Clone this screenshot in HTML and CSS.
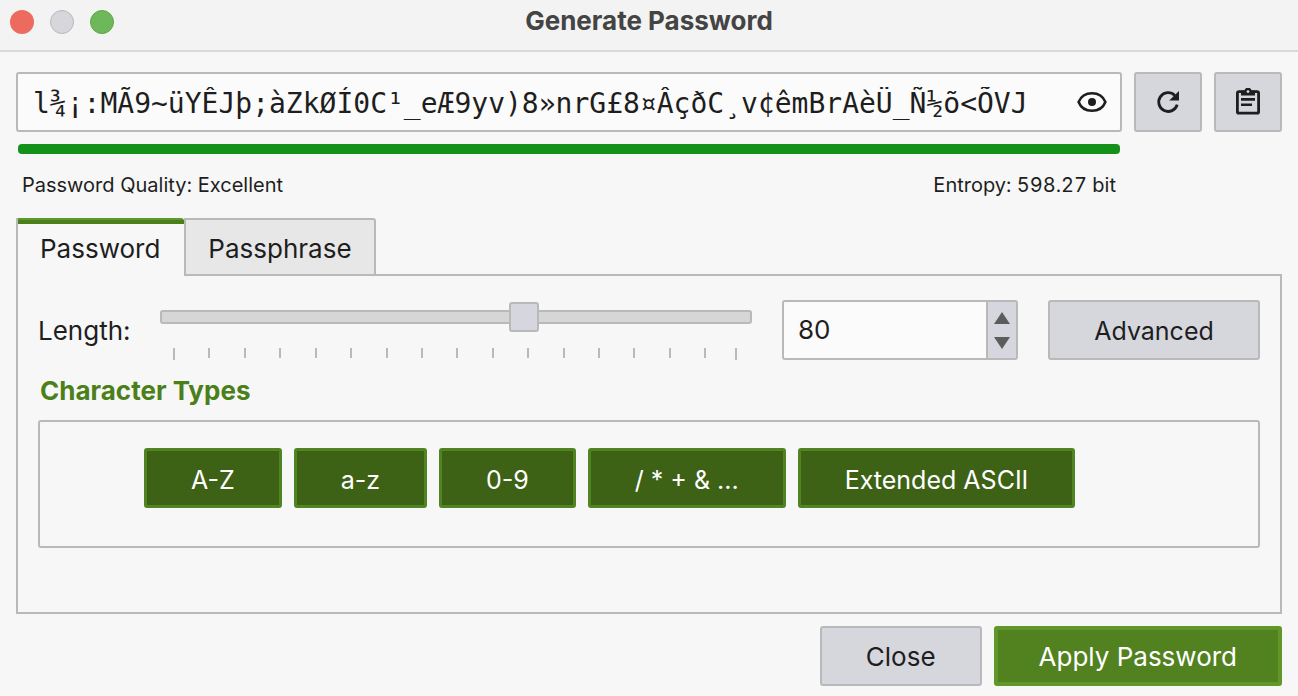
FILE: index.html
```html
<!DOCTYPE html>
<html lang="en">
<head>
  <meta charset="UTF-8">
  <title>Generate Password</title>
  <meta name="viewport" content="width=device-width, initial-scale=1.0">
  <link rel="stylesheet" href="styles.css">
</head>
<body>

  <header class="titlebar">
    <div class="window-buttons">
      <button type="button" class="dot dot-close" aria-label="Close window"></button>
      <button type="button" class="dot dot-min" aria-label="Minimize" disabled></button>
      <button type="button" class="dot dot-zoom" aria-label="Zoom"></button>
    </div>
    <h1>Generate Password</h1>
  </header>

  <main>
    <div class="password-row">
      <div class="password-field">
        <input type="text" id="password" aria-label="Generated password" spellcheck="false" value="l¾¡:MÃ9~üYÊJþ;àZkØÍ0C¹_eÆ9yv)8»nrG£8¤ÂçðC¸v¢êmBrAèÜ_Ñ½õ&lt;ÕVJ">
        <button type="button" class="eye" aria-label="Toggle password visibility">
          <svg width="30" height="22" viewBox="0 0 30 22" fill="none" stroke="#1e1e1e" stroke-width="2.6">
            <path d="M1.6 11C4 5 9 2.2 15 2.2S26 5 28.4 11C26 17 21 19.8 15 19.8S4 17 1.6 11Z"/>
            <circle cx="15" cy="11" r="4" fill="#1e1e1e" stroke="none"/>
          </svg>
        </button>
      </div>
      <button type="button" class="btn icon-btn" aria-label="Regenerate password">
        <svg width="24" height="24" viewBox="0 0 24 24" fill="none">
          <path d="M21.2 14.6A9.4 9.4 0 1 1 18.8 5.4" stroke="#1e1e1e" stroke-width="2.8"/>
          <path d="M23 1V10.5H13.2Z" fill="#1e1e1e"/>
        </svg>
      </button>
      <button type="button" class="btn icon-btn" aria-label="Copy password">
        <svg width="24" height="28" viewBox="0 0 24 28" fill="none">
          <rect x="1.4" y="3.6" width="21.2" height="21.6" rx="1.5" stroke="#1e1e1e" stroke-width="2.8"/>
          <path d="M5 2.5H8.4A3.7 3.7 0 0 1 15.6 2.5H19V7.5H5Z" fill="#1e1e1e"/>
          <circle cx="12" cy="3.6" r="1.4" fill="#d6d6dd"/>
          <path d="M5 11.4H19M5 16.8H16" stroke="#1e1e1e" stroke-width="2.6"/>
        </svg>
      </button>
      <div class="strength">
        <div class="strength-bar"></div>
        <div class="strength-info">
          <span>Password Quality: Excellent</span>
          <span class="entropy">Entropy: 598.27 bit</span>
        </div>
      </div>
    </div>

    <div class="tabs" role="tablist">
      <button type="button" class="tab active" role="tab" aria-selected="true">Password</button>
      <button type="button" class="tab" role="tab" aria-selected="false">Passphrase</button>
    </div>

    <section class="panel" role="tabpanel">
      <div class="length-row">
        <label for="length">Length:</label>
        <div class="slider">
          <input type="range" id="length" min="1" max="128" value="80">
          <div class="ticks">
            <i></i><i></i><i></i><i></i><i></i><i></i><i></i><i></i><i></i><i></i><i></i><i></i><i></i><i></i><i></i><i></i><i></i>
          </div>
        </div>
        <div class="spinbox">
          <input type="text" id="length-value" inputmode="numeric" aria-label="Password length" value="80">
          <div class="spin-buttons">
            <button type="button" aria-label="Increase">
              <svg width="16" height="12" viewBox="0 0 16 12"><path d="M8 0L16 12H0Z" fill="#5c5c5c"/></svg>
            </button>
            <button type="button" aria-label="Decrease">
              <svg width="16" height="12" viewBox="0 0 16 12"><path d="M0 0H16L8 12Z" fill="#5c5c5c"/></svg>
            </button>
          </div>
        </div>
        <button type="button" class="btn advanced">Advanced</button>
      </div>

      <h2>Character Types</h2>
      <div class="char-types">
        <button type="button" class="toggle" aria-pressed="true">A-Z</button>
        <button type="button" class="toggle" aria-pressed="true">a-z</button>
        <button type="button" class="toggle" aria-pressed="true">0-9</button>
        <button type="button" class="toggle" aria-pressed="true">/ * + &amp; ...</button>
        <button type="button" class="toggle" aria-pressed="true">Extended ASCII</button>
      </div>
    </section>

    <div class="actions">
      <button type="button" class="btn close-btn">Close</button>
      <button type="button" class="btn primary">Apply Password</button>
    </div>
  </main>

  <script>
    const slider = document.getElementById("length");
    const lengthValue = document.getElementById("length-value");
    const steps = document.querySelectorAll(".spin-buttons button");

    function setLength(n) {
      slider.value = n;
      lengthValue.value = slider.value;
    }

    slider.addEventListener("input", () => setLength(slider.value));
    lengthValue.addEventListener("change", () => setLength(lengthValue.value));
    steps[0].addEventListener("click", () => setLength(+slider.value + 1));
    steps[1].addEventListener("click", () => setLength(+slider.value - 1));
  </script>

</body>
</html>
```
FILE: styles.css
```css
* {
  box-sizing: border-box;
}

body {
  margin: 0;
  background: #f7f7f7;
  color: #1e1e1e;
  font-family: Inter, sans-serif;
  font-size: 26px;
  line-height: 32px;
}

button,
input {
  margin: 0;
  padding: 0;
  border: none;
  background: none;
  color: inherit;
  font: inherit;
}

svg {
  display: block;
}

.titlebar {
  display: grid;
  grid-template-columns: 1fr auto 1fr;
  align-items: center;
  height: 52px;
  padding: 0 10px 8px;
  background: #f3f3f3;
  border-bottom: 2px solid #d9d9d9;
}

.titlebar h1 {
  margin: 0;
  color: #444;
  font-size: 26px;
  font-weight: 700;
}

.window-buttons {
  display: flex;
  gap: 16px;
  padding-top: 2px;
}

.dot {
  width: 24px;
  height: 24px;
  border-radius: 50%;
}

.dot-close {
  background: #ec6a5e;
}

.dot-min {
  background: #d6d6dc;
  border: 1px solid #b9b9b9;
}

.dot-zoom {
  background: #6db85a;
  border: 1px solid #5fa83f;
}

main {
  padding: 20px 16px 10px;
}

.btn {
  height: 60px;
  padding-top: 2px;
  background: #d6d6dd;
  border: 2px solid #b9b9b9;
  border-radius: 3px;
}

.password-row {
  display: grid;
  grid-template-columns: 1fr 68px 68px;
  column-gap: 12px;
}

.password-field {
  display: flex;
  align-items: center;
  min-width: 0;
  height: 60px;
  padding: 0 13px 0 15px;
  background: #fbfbfb;
  border: 2px solid #b9b9b9;
  border-radius: 3px;
}

.password-field input {
  flex: 1;
  min-width: 0;
  height: 56px;
  padding-top: 2px;
  font-family: "DejaVu Sans Mono", monospace;
  font-size: 28px;
  line-height: 40px;
}

.icon-btn {
  display: flex;
  align-items: center;
  justify-content: center;
  padding: 0;
}

.strength {
  grid-column: 1;
  padding: 12px 2px 0;
}

.strength-bar {
  height: 10px;
  background: #149118;
  border-radius: 4px;
}

.strength-info {
  display: flex;
  justify-content: space-between;
  padding: 19px 4px 21px;
  font-size: 20px;
  line-height: 24px;
}

.entropy {
  font-variant-numeric: tabular-nums;
}

.tabs {
  display: flex;
  margin-bottom: -2px;
}

.tab {
  position: relative;
  height: 58px;
  padding: 4px 22px 0;
  background: #e7e7e7;
  border: 2px solid #b9b9b9;
  border-top-right-radius: 3px;
}

.tab.active {
  padding: 4px 24px 0 22px;
  background: linear-gradient(#5f982b 2px, #4b7f1a 2px, #4b7f1a 6px, #f7f7f7 6px);
  border-width: 0 0 0 2px;
}

.panel {
  padding: 24px 20px 64px;
  border: 2px solid #b9b9b9;
}

.length-row {
  display: grid;
  grid-template-columns: 92px 1fr 236px 212px;
  column-gap: 30px;
  align-items: center;
}

.length-row label {
  padding-top: 2px;
}

.slider {
  padding-top: 2px;
}

.slider input {
  display: block;
  width: 100%;
  height: 30px;
  appearance: none;
}

.slider input::-webkit-slider-runnable-track {
  height: 14px;
  background: #d6d6d7;
  border: 2px solid #b9b9b9;
  border-radius: 3px;
}

.slider input::-webkit-slider-thumb {
  appearance: none;
  width: 30px;
  height: 30px;
  margin-top: -10px;
  background: #d6d6df;
  border: 2px solid #b9b9b9;
  border-radius: 3px;
}

.ticks {
  display: flex;
  margin: 16px 15px 0 13px;
}

.ticks i {
  flex: 35;
  height: 10px;
  border-left: 2px solid #b9b9b9;
}

.ticks i:first-child {
  height: 12px;
}

.ticks i:nth-last-child(2) {
  flex: 30;
}

.ticks i:last-child {
  flex: none;
  height: 12px;
}

.spinbox {
  display: flex;
  height: 60px;
  background: #fbfbfb;
  border: 2px solid #b9b9b9;
  border-radius: 3px;
}

.spinbox input {
  flex: 1;
  min-width: 0;
  padding-left: 14px;
}

.spin-buttons {
  display: flex;
  flex-direction: column;
  width: 30px;
  background: #d6d6df;
  border-left: 2px solid #b9b9b9;
}

.spin-buttons button {
  display: flex;
  flex: 1;
  align-items: flex-end;
  justify-content: center;
  padding-bottom: 5px;
}

.spin-buttons button:last-child {
  align-items: flex-start;
  padding: 8px 0 0;
}

.advanced {
  font-size: 25px;
}

h2 {
  margin: 15px 2px 13px;
  color: #4b7f1a;
  font-size: 26px;
  font-weight: 700;
}

.char-types {
  display: flex;
  gap: 12px;
  padding: 26px 104px 38px;
  border: 2px solid #b9b9b9;
  border-radius: 3px;
}

.toggle {
  height: 60px;
  padding: 4px 44px 0;
  background: #3d6216;
  border: 3px solid #4f8420;
  border-radius: 3px;
  color: #fff;
  font-size: 25px;
  white-space: nowrap;
}

.actions {
  display: flex;
  justify-content: flex-end;
  gap: 12px;
  margin-top: 12px;
}

.close-btn {
  padding: 2px 44px 0;
}

.primary {
  padding: 2px 41px 0;
  background: #528220;
  border: 4px solid #619629;
  color: #fff;
}
```
